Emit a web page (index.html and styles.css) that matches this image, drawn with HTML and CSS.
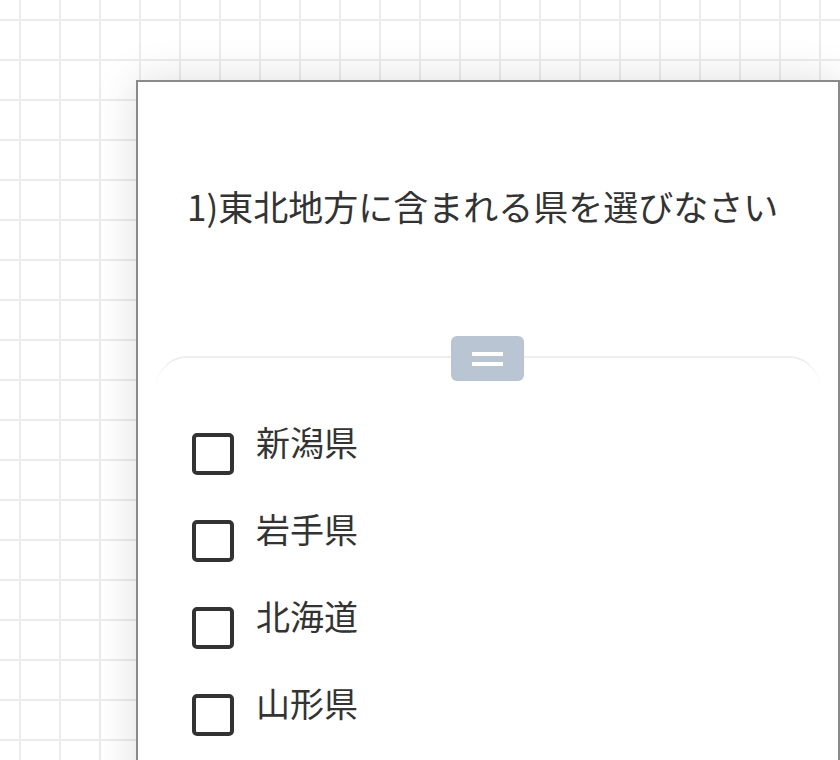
FILE: index.html
```html
<!DOCTYPE html>
<html lang="ja">
<head>
    <meta charset="UTF-8">
    <meta name="viewport" content="width=device-width, initial-scale=1.0">
    <title>問題</title>
    <link rel="stylesheet" href="styles.css">
</head>
<body>
    <div class="canvas">
        <div class="panel">
            <p class="question">1)東北地方に含まれる県を選びなさい</p>
            <div class="sheet">
                <div class="handle">
                    <span class="bar"></span>
                    <span class="bar"></span>
                </div>
                <ul class="choices">
                    <li class="choice"><span class="box"></span><span class="label">新潟県</span></li>
                    <li class="choice"><span class="box"></span><span class="label">岩手県</span></li>
                    <li class="choice"><span class="box"></span><span class="label">北海道</span></li>
                    <li class="choice"><span class="box"></span><span class="label">山形県</span></li>
                </ul>
            </div>
        </div>
    </div>
</body>
</html>
```

FILE: styles.css
```css
html, body {
    margin: 0;
    padding: 0;
    height: 100%;
    overflow: hidden;
}
body {
    font-family: 'Noto Sans CJK JP', 'Noto Sans', sans-serif;
    color: #333;
    background-color: #fff;
}
.canvas {
    height: 100%;
    box-sizing: border-box;
    padding: 80px 0 0 136px;
    background-image: linear-gradient(to right, #ececec 2px, transparent 2px),
                      linear-gradient(to bottom, #ececec 2px, transparent 2px);
    background-size: 40px 40px;
    background-position: 19px 19px;
}
.panel {
    width: 704px;
    height: 760px;
    box-sizing: border-box;
    background-color: #fff;
    border: 2px solid #8a8a8a;
    box-shadow: 0 0 40px rgba(0, 0, 0, 0.13);
    padding: 0 19px;
}
.question {
    margin: 0;
    padding: 99px 0 0 30px;
    font-size: 35px;
    line-height: 50px;
    height: 175px;
}
.sheet {
    position: relative;
    border-top: 2px solid #eeeeee;
    border-radius: 30px 30px 0 0;
    padding-top: 75px;
}
.handle {
    position: absolute;
    top: -22px;
    left: 50%;
    margin-left: -37px;
    width: 73px;
    height: 45px;
    border-radius: 6px;
    background-color: #b9c5d3;
    display: flex;
    flex-direction: column;
    align-items: center;
    justify-content: center;
    gap: 6px;
}
.bar {
    width: 31px;
    height: 4px;
    background-color: #fff;
}
.choices {
    list-style: none;
    margin: 0;
    padding: 0 0 0 35px;
    display: flex;
    flex-direction: column;
    gap: 45px;
}
.choice {
    display: flex;
    align-items: flex-start;
    gap: 22px;
    height: 42px;
}
.box {
    width: 42px;
    height: 42px;
    box-sizing: border-box;
    border: 4px solid #333;
    border-radius: 5px;
    flex-shrink: 0;
}
.label {
    font-size: 34px;
    line-height: 34px;
    margin-top: -8px;
}
```
